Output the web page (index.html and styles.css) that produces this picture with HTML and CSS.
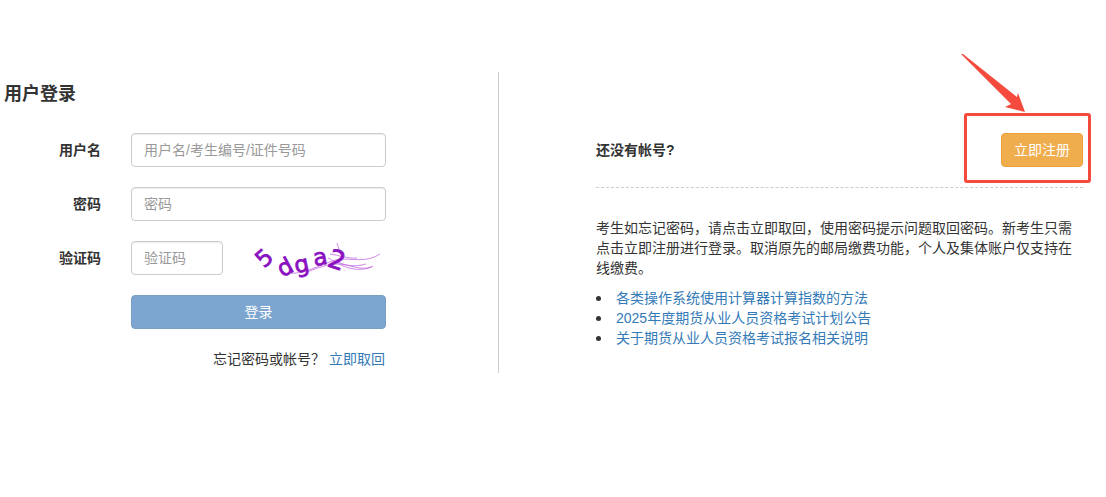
FILE: index.html
```html
<!DOCTYPE html>
<html lang="zh-CN">
<head>
  <meta charset="UTF-8" />
  <title>用户登录</title>
  <link rel="stylesheet" href="styles.css">
</head>
<body>
  <div class="container">
    <div class="login">
      <h3 class="login-title">用户登录</h3>
      <form class="form">
        <div class="form-row">
          <label class="form-label">用户名</label>
          <input class="form-input" type="text" placeholder="用户名/考生编号/证件号码">
        </div>
        <div class="form-row">
          <label class="form-label">密码</label>
          <input class="form-input" type="text" placeholder="密码">
        </div>
        <div class="form-row">
          <label class="form-label">验证码</label>
          <input class="form-input form-input-code" type="text" placeholder="验证码">
          <svg class="captcha" width="140" height="52" viewBox="-10 -8 140 52">
            <g fill="none" stroke="#c46ae0" stroke-width="0.8">
              <path d="M31 33 C52 36 68 24 84 20 C100 17 112 24 128 14"/>
              <path d="M55 32 C70 26 82 22 94 25 C106 28 114 30 121 26"/>
              <path d="M78 14 C86 15 96 19 105 18"/>
              <path d="M76 18 C88 24 100 34 120 27"/>
              <path d="M86 22 C94 26 104 27 114 24"/>
              <path d="M85 3 C87 8 87 12 89 15"/>
            </g>
            <g class="captcha-text">
              <text transform="translate(12 18) rotate(-42)" y="8">5</text>
              <text transform="translate(33 27) rotate(-28)" y="8">d</text>
              <text transform="translate(50 26) rotate(-12)" y="6">g</text>
              <text transform="translate(68 17) rotate(-10)" y="8">a</text>
              <text class="captcha-wide" transform="translate(85 20) rotate(18)" y="9">2</text>
            </g>
          </svg>
        </div>
        <button class="btn-login" type="button">登录</button>
        <div class="forgot">忘记密码或帐号？<a class="link forgot-link">立即取回</a></div>
      </form>
    </div>

    <div class="register">
      <div class="register-head">
        <strong>还没有帐号?</strong>
        <button class="btn-register" type="button">立即注册</button>
      </div>
      <p class="register-note">考生如忘记密码，请点击立即取回，使用密码提示问题取回密码。新考生只需点击立即注册进行登录。取消原先的邮局缴费功能，个人及集体账户仅支持在线缴费。</p>
      <ul class="notice-list">
        <li><a class="link">各类操作系统使用计算器计算指数的方法</a></li>
        <li><a class="link">2025年度期货从业人员资格考试计划公告</a></li>
        <li><a class="link">关于期货从业人员资格考试报名相关说明</a></li>
      </ul>
    </div>
  </div>

  <!-- annotation drawn over the page -->
  <svg class="mark-arrow" width="80" height="70" viewBox="0 0 80 70">
    <polygon points="1,0 3,0 57,43 58,39 65,58 45,53 51,50" fill="#f44b3e"/>
  </svg>
  <div class="mark-box"></div>
</body>
</html>
```

FILE: styles.css
```css
body {
  font-family: "Liberation Sans", "Noto Sans CJK SC", sans-serif;
  font-size: 14px;
  line-height: 20px;
  color: #333;
  background-color: #fff;
  margin: 0;
  position: relative;
}

.container {
  display: flex;
  padding-top: 72px;
  padding-left: 4px;
}

.login {
  width: 495px;
  height: 301px;
  box-sizing: border-box;
  border-right: 1px solid #ccc;
}

.login-title {
  margin: 11px 0 0;
  font-size: 18px;
  line-height: 22px;
  font-weight: bold;
}

.form {
  margin-top: 28px;
}

.form-row {
  display: flex;
  align-items: center;
  height: 34px;
  margin-bottom: 20px;
}

.form-label {
  width: 97px;
  margin-right: 30px;
  text-align: right;
  font-weight: bold;
}

.form-input {
  box-sizing: border-box;
  width: 255px;
  height: 34px;
  padding: 6px 12px;
  border: 1px solid #ccc;
  border-radius: 4px;
  box-shadow: inset 0 1px 1px rgba(0, 0, 0, 0.075);
  font: inherit;
  color: #555;
  outline: none;
}

.form-input::placeholder {
  color: #999;
}

.form-input-code {
  width: 92px;
}

.captcha {
  margin-left: 19px;
  flex: none;
}

.captcha-text {
  font-family: "DejaVu Sans", sans-serif;
  font-size: 23px;
  text-anchor: middle;
  fill: #8a10c0;
  stroke: #8a10c0;
  stroke-width: 0.8;
}

.captcha-wide {
  font-size: 26px;
}

.btn-login {
  display: block;
  width: 255px;
  height: 34px;
  margin-left: 127px;
  padding: 0;
  border: 1px solid #7a9fc6;
  border-radius: 4px;
  background-color: #7ca6d0;
  color: #fff;
  font: inherit;
}

.forgot {
  width: 381px;
  margin-top: 20px;
  text-align: right;
}

.forgot-link {
  margin-left: 4px;
}

.link {
  color: #337ab7;
}

.register {
  width: 487px;
  margin-left: 97px;
  padding-top: 61px;
}

.register-head {
  display: flex;
  justify-content: space-between;
  align-items: center;
  padding-bottom: 20px;
  border-bottom: 1px dashed #ccc;
}

.btn-register {
  width: 82px;
  height: 34px;
  padding: 0;
  border: 1px solid #eea236;
  border-radius: 4px;
  background-color: #f0ad4e;
  color: #fff;
  font: inherit;
}

.register-note {
  margin: 30px 0 10px;
}

.notice-list {
  margin: 0;
  padding: 0;
  list-style: none;
}

.notice-list li {
  display: flex;
  align-items: center;
}

.notice-list li::before {
  content: "";
  width: 5px;
  height: 5px;
  margin-right: 15px;
  border-radius: 50%;
  background-color: #333;
}

/* annotation */
.mark-arrow {
  position: absolute;
  left: 960px;
  top: 54px;
}

.mark-box {
  position: absolute;
  left: 964px;
  top: 113px;
  width: 121px;
  height: 64px;
  border: 3px solid #f44b3e;
  border-radius: 3px;
}
```
